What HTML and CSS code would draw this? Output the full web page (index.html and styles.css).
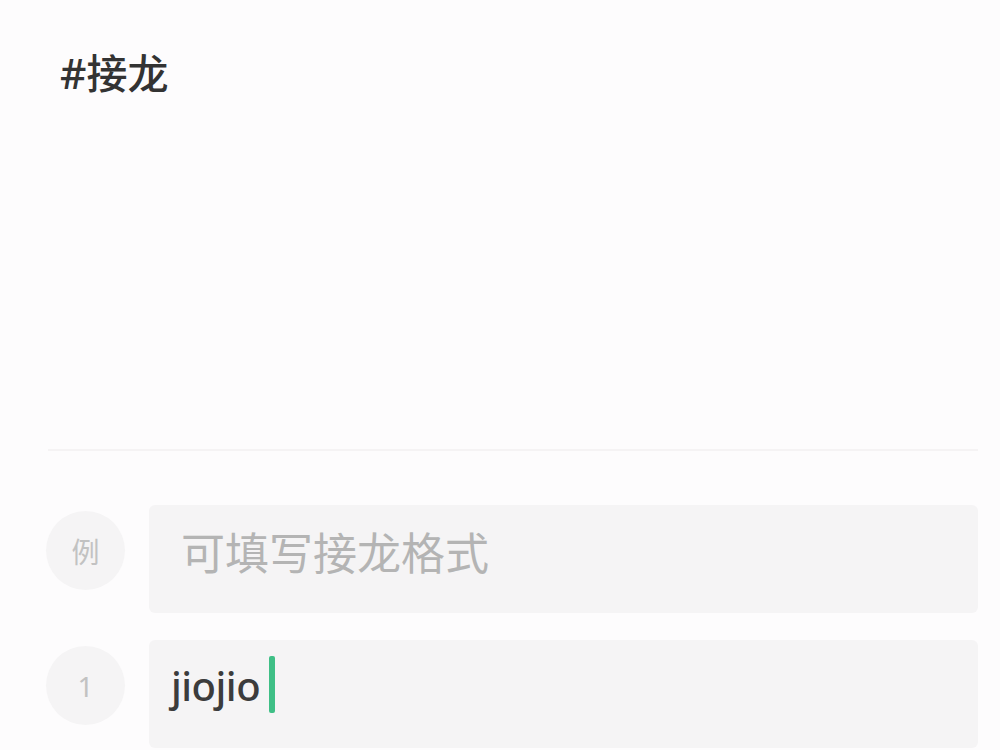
FILE: index.html
```html
<!DOCTYPE html>
<html lang="zh-CN">
  <head>
    <meta charset="UTF-8" />
    <meta name="viewport" content="width=device-width, initial-scale=1.0" />
    <title>接龙</title>
    <link rel="stylesheet" href="styles.css">
  </head>
  <body>
    <div class="page">
      <div class="topic">
        <h1 class="topic-title">#接龙</h1>
      </div>
      <div class="entries">
        <div class="entry">
          <div class="entry-index">例</div>
          <div class="entry-box">
            <span class="placeholder">可填写接龙格式</span>
          </div>
        </div>
        <div class="entry">
          <div class="entry-index">1</div>
          <div class="entry-box">
            <span class="value">jiojio</span><span class="caret"></span>
          </div>
        </div>
      </div>
    </div>
  </body>
</html>
```

FILE: styles.css
```css
body {
  font-family: "Noto Sans", "Noto Sans CJK SC", sans-serif;
  background-color: #fdfcfd;
  margin: 0;
  height: 750px;
  overflow: hidden;
}
.page {
  padding: 0 22px 0 46px;
}
.topic {
  height: 451px;
  padding: 45px 0 0 12px;
  box-sizing: border-box;
  border-bottom: 2px solid #f5f3f4;
  margin-left: 2px;
}
.topic-title {
  margin: 0;
  font-size: 41px;
  line-height: 56px;
  font-weight: 500;
  color: #333;
}
.entries {
  display: flex;
  flex-direction: column;
  gap: 27px;
  padding-top: 54px;
}
.entry {
  display: flex;
  align-items: flex-start;
  gap: 24px;
}
.entry-index {
  flex: none;
  width: 79px;
  height: 79px;
  margin-top: 6px;
  border-radius: 50%;
  background-color: #f5f4f5;
  color: #c2c2c2;
  font-size: 28px;
  display: flex;
  align-items: center;
  justify-content: center;
}
.entry-box {
  flex: 1;
  height: 108px;
  background-color: #f5f4f5;
  border-radius: 6px;
  display: flex;
  align-items: center;
  padding: 0 22px;
  box-sizing: border-box;
}
.placeholder {
  font-size: 44px;
  color: #b4b4b4;
  padding-left: 10px;
  margin-top: -16px;
}
.value {
  font-size: 40px;
  font-weight: 500;
  color: #3c3c3c;
  margin-top: -18px;
  letter-spacing: -0.5px;
}
.caret {
  width: 6px;
  height: 57px;
  margin-left: 9px;
  margin-top: -20px;
  background-color: #3fbf86;
  border-radius: 2px;
}
```
